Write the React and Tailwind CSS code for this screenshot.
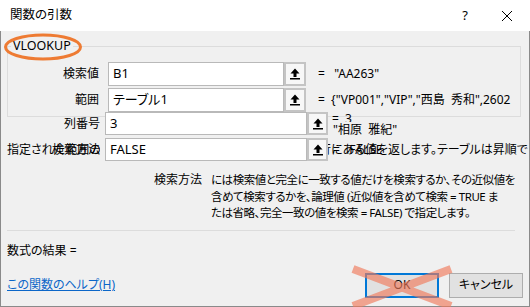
function UpArrow() {
  return (
    <svg width="10" height="12" viewBox="0 0 10 12">
      <polygon points="5,0.5 9.5,5.5 6.5,5.5 6.5,9 3.5,9 3.5,5.5 0.5,5.5" fill="#000" />
      <rect x="0" y="10" width="10" height="1.5" fill="#000" />
    </svg>
  );
}

function RefButton({ className }) {
  return (
    <div
      className={`flex shrink-0 items-center justify-center border-2 border-[#c4c4c4] bg-[#f7f7f7] ${className}`}
    >
      <UpArrow />
    </div>
  );
}

function Field({ value, className }) {
  return (
    <div
      className={`flex shrink-0 items-center border border-[#b9b9b9] bg-white pl-[4px] text-[13px] ${className}`}
    >
      {value}
    </div>
  );
}

export default function App() {
  return (
    <div className="relative h-[307px] w-[530px] overflow-hidden bg-white font-['Noto_Sans','Noto_Sans_CJK_JP',sans-serif] text-[12px] text-black [font-feature-settings:'palt']">
      {/* title bar */}
      <div className="flex h-[31px] items-center bg-white pl-[10px] pr-[17px]">
        <span className="text-[12.5px]">関数の引数</span>
        <span className="ml-auto mr-[33px] text-[13px]">?</span>
        <svg width="12" height="12" viewBox="0 0 12 12">
          <path d="M1 1 L11 11 M11 1 L1 11" stroke="#000" strokeWidth="1" />
        </svg>
      </div>

      <div className="flex h-[276px] flex-col border-x border-b border-[#8a8a8a] bg-[#f0f0f0]">
        {/* group box */}
        <div className="relative ml-[6px] mt-[15px] h-[71px] w-[514px] border border-[#dcdcdc] pr-[5px] pt-[15px]">
          <span className="absolute -top-[10px] left-[3px] bg-[#f0f0f0] px-[2px] text-[12.5px]">VLOOKUP</span>
          <svg className="absolute -left-[5px] -top-[15px]" width="82" height="30" viewBox="0 0 82 30">
            <ellipse cx="40" cy="15" rx="37.5" ry="12" fill="none" stroke="#ee7b33" strokeWidth="3" />
          </svg>

          <div className="flex h-[24px] items-center">
            <div className="w-[91px] shrink-0 text-right">検索値</div>
            <Field value="B1" className="ml-[9px] h-[24px] w-[176px]" />
            <RefButton className="h-[24px] w-[22px]" />
            <div className="ml-[12px] min-w-0 flex-1 overflow-hidden whitespace-nowrap">
              =&nbsp;&nbsp;&nbsp;"AA263"
            </div>
          </div>
          <div className="mt-[2px] flex h-[24px] items-center">
            <div className="w-[91px] shrink-0 text-right">範囲</div>
            <Field value="テーブル1" className="ml-[9px] h-[24px] w-[176px]" />
            <RefButton className="h-[24px] w-[22px]" />
            <div className="ml-[12px] min-w-0 flex-1 overflow-hidden whitespace-nowrap">
              =&nbsp;&nbsp;&#123;"VP001","VIP","西島&nbsp;&nbsp;秀和",2602
            </div>
          </div>
        </div>

        {/* rows drawn over the group box edge */}
        <div className="relative z-10 -mt-[5px] flex h-[23px] items-center">
          <div className="w-[99px] shrink-0 text-right">列番号</div>
          <Field value="3" className="ml-[5px] h-[23px] w-[202px]" />
          <RefButton className="h-[23px] w-[21px]" />
          <div className="relative ml-[4px] h-[23px] flex-1">
            <span className="absolute left-0 top-[-1px] whitespace-nowrap leading-[16px]">
              =<span className="ml-[6px]">3</span>
            </span>
            <span className="absolute left-[1px] top-[10px] whitespace-nowrap bg-[#f0f0f0] leading-[15px]">
              "相原&nbsp;&nbsp;雅紀"
            </span>
          </div>
        </div>
        <div className="relative z-10 mt-[3px] flex h-[23px] items-center">
          <div className="relative h-[23px] w-[99px] shrink-0 overflow-hidden">
            <span className="absolute left-[6px] top-[3px] whitespace-nowrap">指定された範囲の左端の列で</span>
            <span className="absolute right-0 top-[3px] whitespace-nowrap">検索方法</span>
          </div>
          <div className="relative ml-[5px] flex h-[23px] items-center">
            <span className="absolute left-[214px] top-[3px] whitespace-nowrap">行にある値を返します。テーブルは昇順で</span>
            <Field value="FALSE" className="relative h-[23px] w-[202px]" />
            <RefButton className="relative h-[23px] w-[21px]" />
          </div>
          <div className="relative ml-[5px] whitespace-nowrap">=&nbsp;&nbsp;&nbsp;FALSE</div>
        </div>

        {/* description */}
        <div className="mt-[11px] flex leading-[16.5px]">
          <div className="w-[201px] shrink-0 text-right">検索方法</div>
          <div className="ml-[9px] whitespace-nowrap text-[11.5px] tracking-[-0.45px]">
            <div>には検索値と完全に一致する値だけを検索するか、その近似値を</div>
            <div>含めて検索するかを、論理値 (近似値を含めて検索 = TRUE ま</div>
            <div>たは省略、完全一致の値を検索 = FALSE) で指定します。</div>
          </div>
        </div>

        <div className="ml-[6px] mt-[8px] h-px w-[508px] bg-[#dcdcdc]" />

        <div className="ml-[6px] mt-[12px] leading-[16px]">数式の結果 =</div>

        <div className="mt-[14px] flex items-center">
          <span className="ml-[6px] text-[#0b66c8] underline">この関数のヘルプ(H)</span>
          <button className="ml-auto flex h-[25px] w-[74px] items-center justify-center border-2 border-[#0078d7] bg-[#e1e1e1] text-[12px]">
            OK
          </button>
          <button className="ml-[10px] mr-[6px] flex h-[25px] w-[74px] items-center justify-center border border-[#adadad] bg-[#e1e1e1] text-[12px]">
            キャンセル
          </button>
        </div>
      </div>

      {/* annotation cross over the OK button */}
      <svg className="absolute left-[350px] top-[263px]" width="104" height="46" viewBox="0 0 104 46">
        <path d="M3 6 L101 43 M3 43 L101 6" stroke="#f07a5a" strokeOpacity="0.65" strokeWidth="8" />
      </svg>
    </div>
  );
}
